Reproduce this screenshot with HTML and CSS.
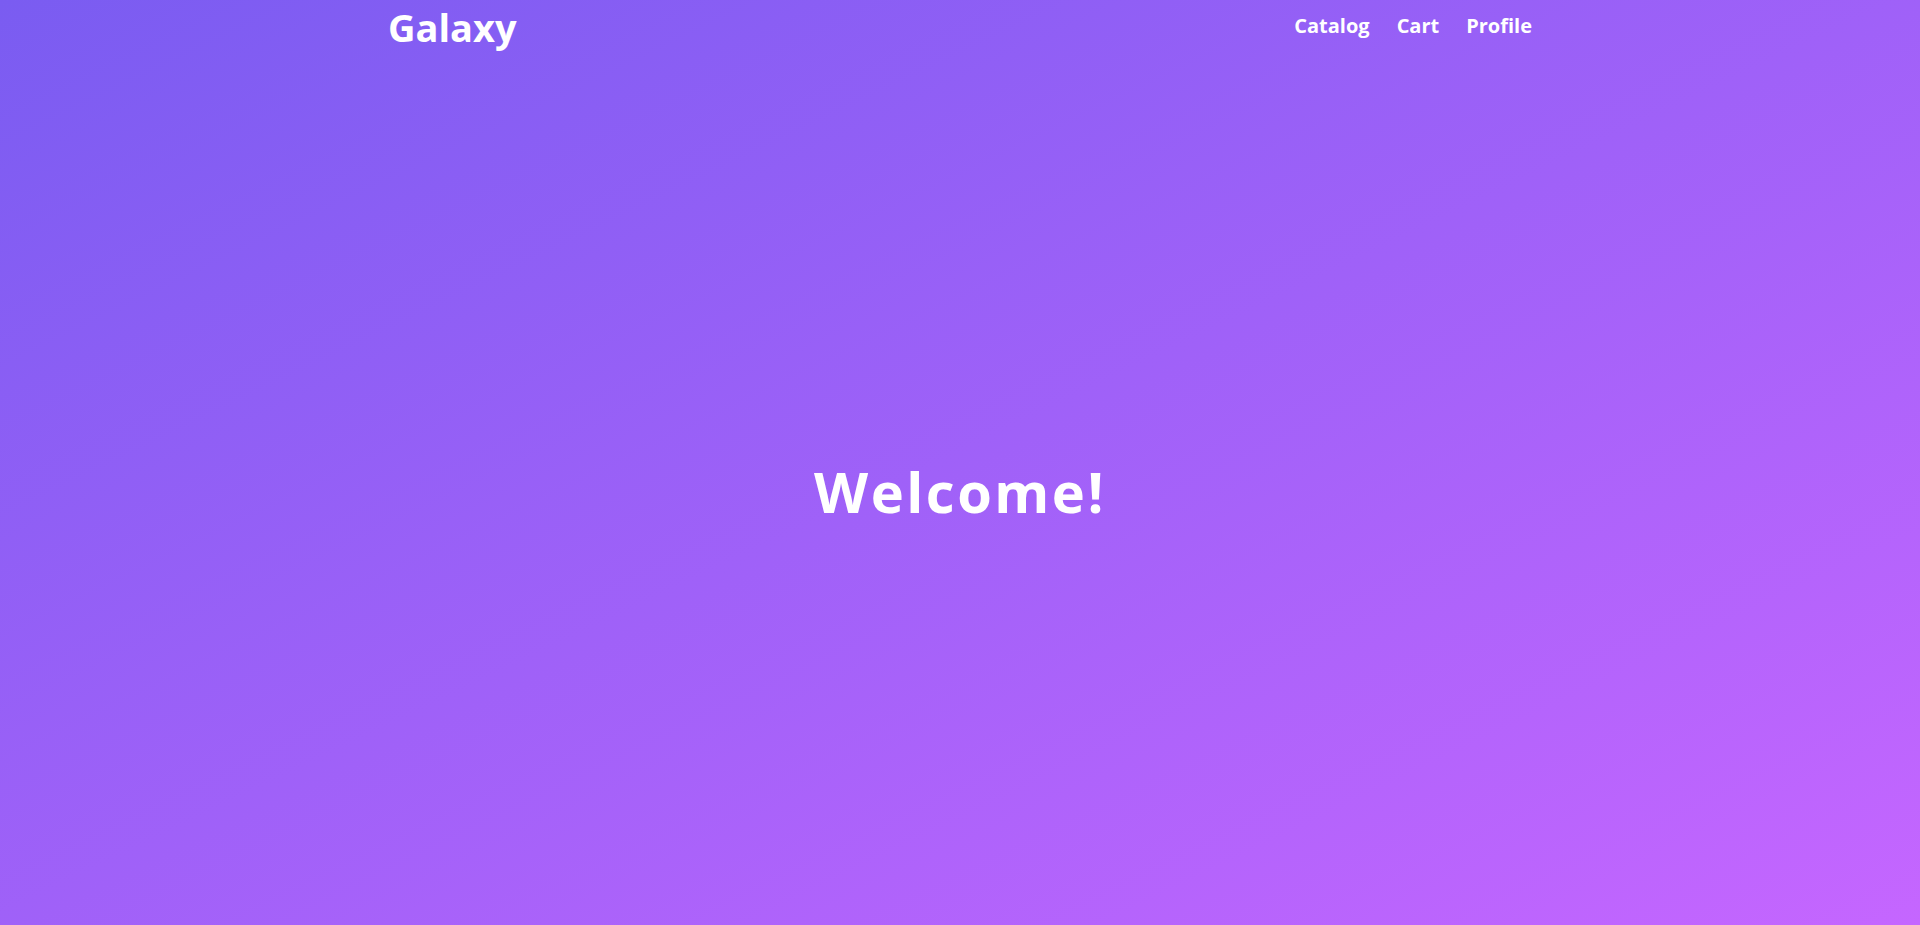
FILE: index.html
```html
<!DOCTYPE html>
<html lang="en">
<head>
<meta charset="utf-8">
<title>Galaxy</title>
<link rel="stylesheet" href="styles.css">
</head>
<body>
<div class="page">
  <header class="header">
    <a class="logo" href="#">Galaxy</a>
    <nav class="nav">
      <a class="nav-link" href="#">Catalog</a>
      <a class="nav-link" href="#">Cart</a>
      <a class="nav-link" href="#">Profile</a>
    </nav>
  </header>
  <main class="main">
    <h1 class="welcome">Welcome!</h1>
  </main>
</div>
</body>
</html>
```

FILE: styles.css
```css
html, body {
  margin: 0;
  padding: 0;
  height: 100%;
}
body {
  font-family: "Open Sans", "DejaVu Sans", sans-serif;
  color: #fff;
  background: linear-gradient(to bottom right, #7a5cf1, #c566ff);
}
.page {
  min-height: 100vh;
  display: flex;
  flex-direction: column;
}
.header {
  width: 1144px;
  margin: 0 auto;
  height: 56px;
  display: flex;
  align-items: center;
  justify-content: space-between;
}
.logo {
  color: #fff;
  text-decoration: none;
  font-weight: 700;
  font-size: 38px;
  line-height: 1;
  padding-bottom: 3px;
}
.nav {
  display: flex;
  gap: 27px;
  padding-bottom: 4px;
}
.nav-link {
  color: #fff;
  text-decoration: none;
  font-weight: 700;
  font-size: 20px;
  line-height: 1;
}
.main {
  flex: 1;
  display: flex;
  align-items: center;
  justify-content: center;
}
.welcome {
  margin: 0;
  font-size: 56px;
  font-weight: 700;
  line-height: 1;
  letter-spacing: 2.5px;
}
```
